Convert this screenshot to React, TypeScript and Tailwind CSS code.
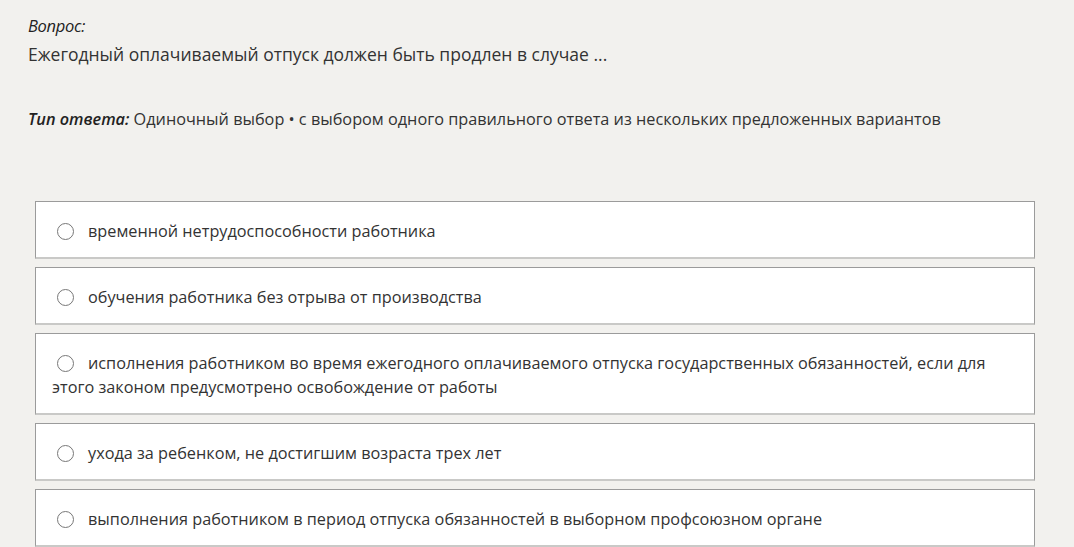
import React from 'react'

const options: string[] = [
  'временной нетрудоспособности работника',
  'обучения работника без отрыва от производства',
  'исполнения работником во время ежегодного оплачиваемого отпуска государственных обязанностей, если для этого законом предусмотрено освобождение от работы',
  'ухода за ребенком, не достигшим возраста трех лет',
  'выполнения работником в период отпуска обязанностей в выборном профсоюзном органе',
]

const Radio: React.FC = () => (
  <span className="inline-block align-[-3px] w-[17px] h-[17px] rounded-full border border-[#777] bg-white ml-[5px] mr-[14px]" />
)

const Option: React.FC<{ text: string }> = ({ text }) => (
  <label className="block bg-white border border-[#9b9b9b] border-b-2 border-b-[#c9c9c7] px-4 pt-[17px] pb-[14px] text-[16.25px] leading-[24px] text-[#333]">
    <Radio />
    {text}
  </label>
)

export default function App() {
  return (
    <div className="min-h-[547px] bg-[#f2f1ee] font-['Open_Sans',sans-serif] text-[#333] px-[28px] pt-[14px]">
      <p className="italic text-[16.5px] leading-[24px] text-[#222] tracking-[-0.3px]">Вопрос:</p>
      <p className="text-[17.5px] leading-[28px] mt-[2px]">
        Ежегодный оплачиваемый отпуск должен быть продлен в случае ...
      </p>
      <p className="mt-[39px] text-[16.25px] leading-[24px]">
        <span className="italic font-semibold text-[#222]">Тип ответа:</span> Одиночный выбор • с выбором одного правильного ответа из нескольких предложенных вариантов
      </p>
      <div className="mt-[70px] ml-[7px] w-[1000px] flex flex-col gap-[8px]">
        {options.map((o, i) => (
          <Option key={i} text={o} />
        ))}
      </div>
    </div>
  )
}
